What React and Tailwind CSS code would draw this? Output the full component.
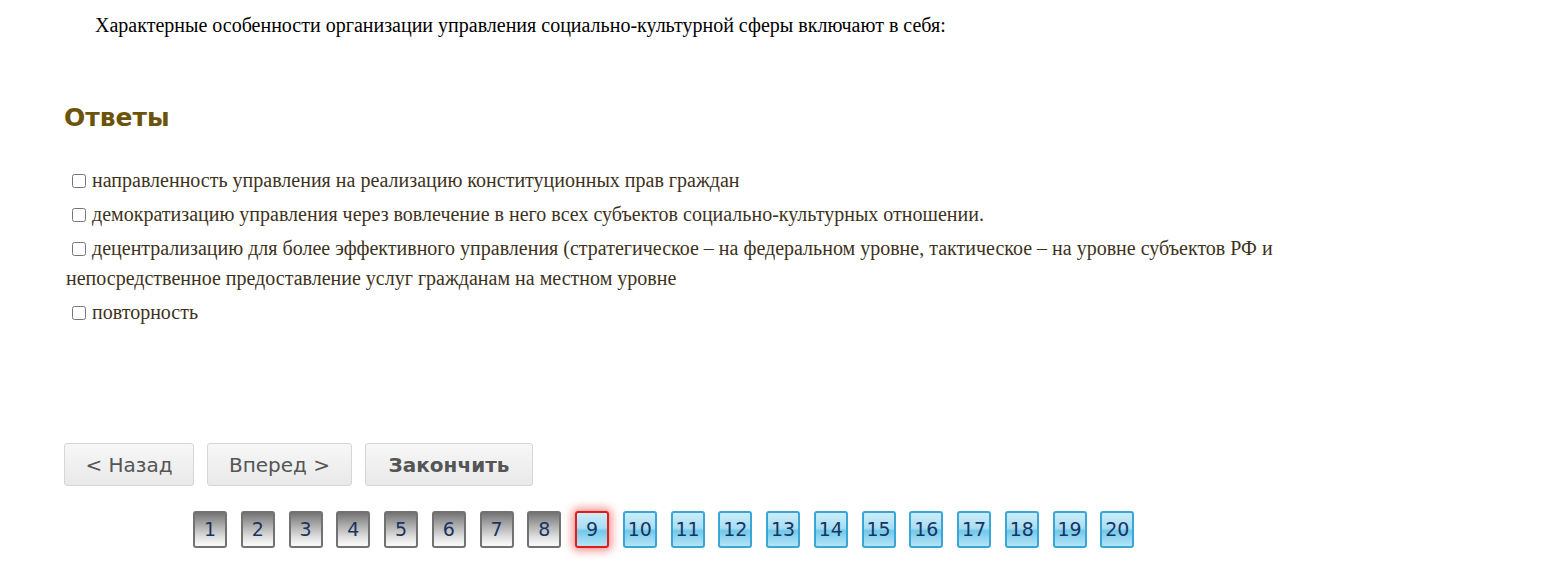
import { useState } from "react";

const answers = [
  "направленность управления на реализацию конституционных прав граждан",
  "демократизацию управления через вовлечение в него всех субъектов социально-культурных отношении.",
  "децентрализацию для более эффективного управления (стратегическое – на федеральном уровне, тактическое – на уровне субъектов РФ и непосредственное предоставление услуг гражданам на местном уровне",
  "повторность",
];

function PageButton({ n, current, done }) {
  if (done) {
    return (
      <button className="w-[34px] h-[37px] rounded-[3px] border-2 border-[#727272] bg-[linear-gradient(to_bottom,#747474_0%,#a9a9a9_35%,#e2e2e2_75%,#fbfbfb_100%)] text-[19px] leading-none text-[#1a3461] font-['DejaVu_Sans',sans-serif] flex items-center justify-center">
        {n}
      </button>
    );
  }
  return (
    <button
      className={
        current
          ? "w-[34px] h-[37px] rounded-[3px] border-2 border-[#e21b1b] shadow-[0_0_8px_3px_rgba(240,60,60,0.55)] bg-[linear-gradient(to_bottom,#cbedfa_0%,#a8ddf3_46%,#6fc9ea_54%,#92d6f1_75%,#b4e4f6_100%)] text-[19px] leading-none text-[#1a3461] font-['DejaVu_Sans',sans-serif] flex items-center justify-center"
          : "w-[34px] h-[37px] rounded-[3px] border-2 border-[#3aa6d6] bg-[linear-gradient(to_bottom,#cbedfa_0%,#a8ddf3_46%,#6fc9ea_54%,#92d6f1_75%,#b4e4f6_100%)] text-[19px] leading-none text-[#1a3461] font-['DejaVu_Sans',sans-serif] flex items-center justify-center"
      }
    >
      {n}
    </button>
  );
}

export default function App() {
  const [checked, setChecked] = useState([false, false, false, false]);
  const current = 9;

  return (
    <div className="min-h-screen bg-white pl-[64px] pt-[11px]">
      <p className="pl-[31px] text-[20px] leading-[28px] text-black font-['Liberation_Serif',serif]">
        Характерные особенности организации управления социально-культурной сферы включают в себя:
      </p>

      <h2 className="mt-[63px] text-[25px] leading-[32px] font-bold text-[#6b5309] font-['DejaVu_Sans',sans-serif]">
        Ответы
      </h2>

      <div className="mt-[31px] w-[1260px] text-[20px] text-[#3d321c] font-['Liberation_Serif',serif]">
        {answers.map((a, i) => (
          <div key={i} className="leading-[30px] mb-[4px] pl-[2px]">
            <input
              type="checkbox"
              checked={checked[i]}
              onChange={() => setChecked(checked.map((c, j) => (j === i ? !c : c)))}
              className="w-[14px] h-[14px] ml-[6px] mr-[6px] align-[-1px] accent-[#3d321c]"
            />
            {a}
          </div>
        ))}
      </div>

      <div className="mt-[116px] flex gap-[13px]">
        <button className="h-[43px] w-[130px] rounded-[3px] border border-[#d6d6d6] bg-gradient-to-b from-[#f7f7f7] to-[#e9e9e9] text-[20px] text-[#555] font-['DejaVu_Sans',sans-serif]">
          &lt; Назад
        </button>
        <button className="h-[43px] w-[145px] rounded-[3px] border border-[#d6d6d6] bg-gradient-to-b from-[#f7f7f7] to-[#e9e9e9] text-[20px] text-[#555] font-['DejaVu_Sans',sans-serif]">
          Вперед &gt;
        </button>
        <button className="h-[43px] w-[168px] rounded-[3px] border border-[#d6d6d6] bg-gradient-to-b from-[#f7f7f7] to-[#e9e9e9] text-[20px] font-bold text-[#555] font-['DejaVu_Sans',sans-serif]">
          Закончить
        </button>
      </div>

      <div className="mt-[25px] ml-[129px] flex gap-[13.75px]">
        {Array.from({ length: 20 }, (_, i) => i + 1).map((n) => (
          <PageButton key={n} n={n} current={n === current} done={n < current} />
        ))}
      </div>
    </div>
  );
}
